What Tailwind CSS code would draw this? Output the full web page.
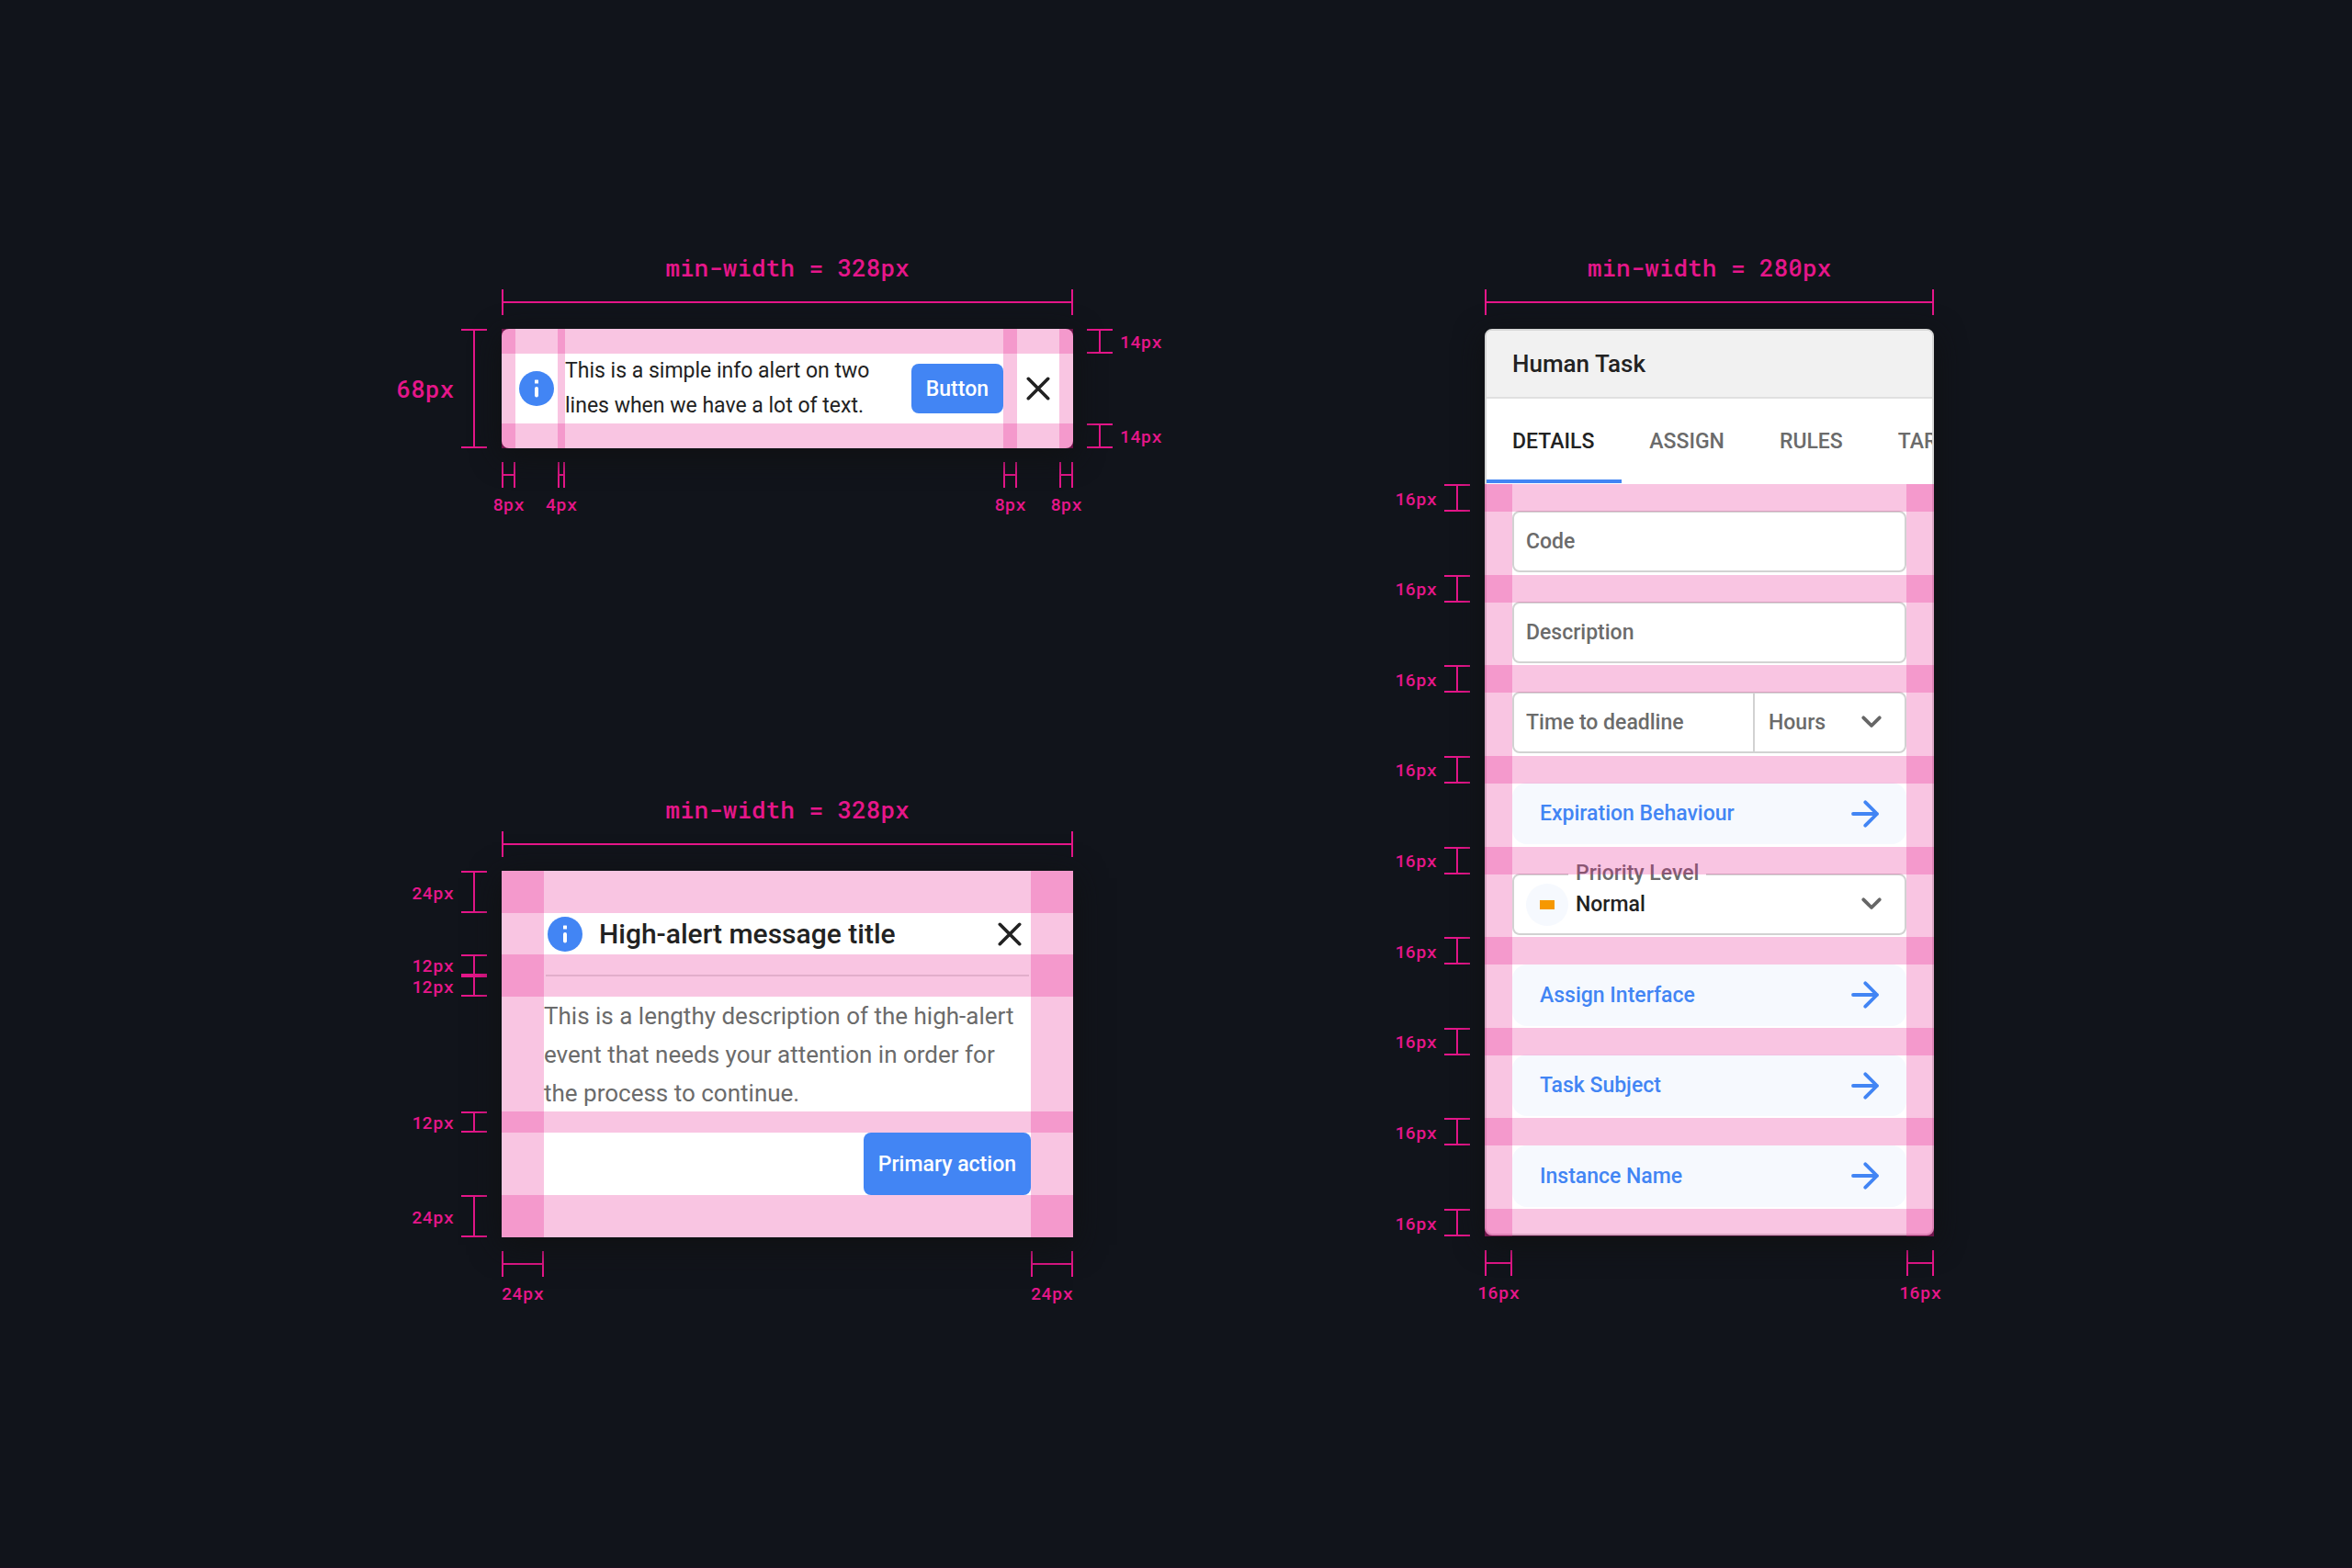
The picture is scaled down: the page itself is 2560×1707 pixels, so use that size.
<!DOCTYPE html>
<html lang="en">
<head>
    <meta charset="UTF-8">
    <meta name="viewport" content="width=device-width, initial-scale=1.0">
    <title>Spacing and minimum widths</title>
    <script src="https://cdn.jsdelivr.net/npm/@tailwindcss/browser@4"></script>
</head>
<body class="min-h-screen bg-[#11141b] border-b border-[#1c1020] font-['Roboto',sans-serif] text-[#222222]">

    <!-- Shared icons -->
    <svg class="hidden">
        <symbol id="icon-info" viewBox="0 0 38 38">
            <circle cx="19" cy="19" r="19" fill="#4285f4"/>
            <rect x="17" y="9.500" width="4" height="4" rx="0.500" fill="#fff"/>
            <path d="M19 19v7.500" stroke="#fff" stroke-width="4" stroke-linecap="round"/>
        </symbol>
        <symbol id="icon-close" viewBox="0 0 26 26">
            <path d="M2.300 2.300l21.400 21.400M23.700 2.300L2.300 23.700" stroke="#222" stroke-width="3.600" stroke-linecap="round"/>
        </symbol>
        <symbol id="icon-chevron" viewBox="0 0 22 14">
            <path d="M2.300 2.300L11 11l8.700-8.700" fill="none" stroke="#666" stroke-width="3.800" stroke-linecap="round" stroke-linejoin="round"/>
        </symbol>
        <symbol id="icon-arrow" viewBox="0 0 30 30">
            <path d="M2 15h26M15.300 2.300L28 15 15.300 27.700" fill="none" stroke="#4285f4" stroke-width="3.800" stroke-linecap="round" stroke-linejoin="round"/>
        </symbol>
    </svg>

    <main class="flex justify-center gap-[213px] pt-[276px]">

        <div class="flex flex-col gap-[305px]">

            <!-- Inline alert -->
            <section class="grid grid-cols-[120px_622px_115px] font-['Roboto_Mono','DejaVu_Sans_Mono',monospace] text-[19px] font-medium leading-none text-[#e6168a]">
                <div class="col-start-2">
                    <p class="mb-2 text-center text-[26px] leading-[31px]">min-width = 328px</p>
                    <div class="mb-[15px] flex h-7 items-center border-x-2 border-[#e6168a]"><span class="h-0.5 w-full bg-[#e6168a]"></span></div>
                </div>

                <div class="col-start-1 flex items-center justify-end gap-2 pr-4 text-[26px]">
                    <span>68px</span>
                    <div class="flex w-7 justify-center self-stretch border-y-2 border-[#e6168a]"><span class="w-0.5 bg-[#e6168a]"></span></div>
                </div>

                <div class="relative">
                    <div role="alert" class="flex items-center rounded-lg bg-white px-[15px] py-[27px] font-['Roboto',sans-serif] text-[#222222] shadow-[0_8px_32px_#101112]">
                        <span class="mr-2 flex w-[46px] shrink-0 justify-center">
                            <svg class="size-[38px]"><use href="#icon-info"/></svg>
                        </span>
                        <p class="flex-1 text-[23px] leading-[38px] font-normal whitespace-nowrap">This is a simple info alert on two<br>lines when we have a lot of text.</p>
                        <button type="button" class="mr-[15px] h-[54px] rounded-lg bg-[#4285f4] px-4 text-[23px] font-medium text-white">Button</button>
                        <button type="button" aria-label="Close" class="flex w-[46px] justify-center">
                            <svg class="size-[26px]"><use href="#icon-close"/></svg>
                        </button>
                    </div>
                    <div class="pointer-events-none absolute inset-0 grid grid-cols-[15px_46px_8px_1fr_15px_46px_15px]">
                        <span class="col-start-1 bg-[#e7178b]/25"></span>
                        <span class="col-start-3 bg-[#e7178b]/25"></span>
                        <span class="col-start-5 bg-[#e7178b]/25"></span>
                        <span class="col-start-7 bg-[#e7178b]/25"></span>
                    </div>
                    <div class="pointer-events-none absolute inset-0 flex flex-col justify-between">
                        <span class="h-[27px] bg-[#e7178b]/25"></span>
                        <span class="h-[27px] bg-[#e7178b]/25"></span>
                    </div>
                </div>

                <div class="flex flex-col justify-between pl-[15px]">
                    <div class="flex h-[27px] items-center gap-2">
                        <div class="flex w-7 justify-center self-stretch border-y-2 border-[#e6168a]"><span class="w-0.5 bg-[#e6168a]"></span></div>
                        <span>14px</span>
                    </div>
                    <div class="flex h-[27px] items-center gap-2">
                        <div class="flex w-7 justify-center self-stretch border-y-2 border-[#e6168a]"><span class="w-0.5 bg-[#e6168a]"></span></div>
                        <span>14px</span>
                    </div>
                </div>

                <div class="col-start-2 mt-[15px] grid grid-cols-[15px_46px_8px_1fr_15px_46px_15px] leading-6">
                    <div class="col-start-1 flex flex-col items-center gap-1.5">
                        <div class="flex h-7 w-full items-center border-x-2 border-[#e6168a]"><span class="h-0.5 w-full bg-[#e6168a]"></span></div>
                        <span>8px</span>
                    </div>
                    <div class="col-start-3 flex flex-col items-center gap-1.5">
                        <div class="flex h-7 w-full items-center border-x-2 border-[#e6168a]"><span class="h-0.5 w-full bg-[#e6168a]"></span></div>
                        <span>4px</span>
                    </div>
                    <div class="col-start-5 flex flex-col items-center gap-1.5">
                        <div class="flex h-7 w-full items-center border-x-2 border-[#e6168a]"><span class="h-0.5 w-full bg-[#e6168a]"></span></div>
                        <span>8px</span>
                    </div>
                    <div class="col-start-7 flex flex-col items-center gap-1.5">
                        <div class="flex h-7 w-full items-center border-x-2 border-[#e6168a]"><span class="h-0.5 w-full bg-[#e6168a]"></span></div>
                        <span>8px</span>
                    </div>
                </div>
            </section>

            <!-- High-alert dialog -->
            <section class="grid grid-cols-[120px_622px_115px] font-['Roboto_Mono','DejaVu_Sans_Mono',monospace] text-[19px] font-medium leading-none text-[#e6168a]">
                <div class="col-start-2">
                    <p class="mb-2 text-center text-[26px] leading-[31px]">min-width = 328px</p>
                    <div class="mb-[15px] flex h-7 items-center border-x-2 border-[#e6168a]"><span class="h-0.5 w-full bg-[#e6168a]"></span></div>
                </div>

                <div class="col-start-1 grid grid-rows-[46px_45px_23px_23px_125px_23px_68px_46px] pr-4">
                    <div class="row-start-1 flex items-center justify-end gap-2">
                        <span>24px</span>
                        <div class="flex w-7 justify-center self-stretch border-y-2 border-[#e6168a]"><span class="w-0.5 bg-[#e6168a]"></span></div>
                    </div>
                    <div class="row-start-3 flex items-center justify-end gap-2">
                        <span>12px</span>
                        <div class="flex w-7 justify-center self-stretch border-y-2 border-[#e6168a]"><span class="w-0.5 bg-[#e6168a]"></span></div>
                    </div>
                    <div class="row-start-4 flex items-center justify-end gap-2">
                        <span>12px</span>
                        <div class="flex w-7 justify-center self-stretch border-y-2 border-[#e6168a]"><span class="w-0.5 bg-[#e6168a]"></span></div>
                    </div>
                    <div class="row-start-6 flex items-center justify-end gap-2">
                        <span>12px</span>
                        <div class="flex w-7 justify-center self-stretch border-y-2 border-[#e6168a]"><span class="w-0.5 bg-[#e6168a]"></span></div>
                    </div>
                    <div class="row-start-8 flex items-center justify-end gap-2">
                        <span>24px</span>
                        <div class="flex w-7 justify-center self-stretch border-y-2 border-[#e6168a]"><span class="w-0.5 bg-[#e6168a]"></span></div>
                    </div>
                </div>

                <div class="relative">
                    <div role="alertdialog" aria-labelledby="dialog-title" class="grid grid-rows-[45px_46px_125px_23px_68px] bg-white px-[46px] py-[46px] font-['Roboto',sans-serif] text-[#222222] shadow-[0_8px_32px_#101112]">
                        <div class="flex items-center">
                            <span class="flex w-[46px] justify-center">
                                <svg class="size-[38px]"><use href="#icon-info"/></svg>
                            </span>
                            <h2 id="dialog-title" class="flex-1 pl-3.5 text-[30px] font-medium">High-alert message title</h2>
                            <button type="button" aria-label="Close" class="flex w-[46px] justify-center">
                                <svg class="size-[26px]"><use href="#icon-close"/></svg>
                            </button>
                        </div>
                        <hr class="mx-0.5 self-center border-t-2 border-[#e0e0e0]">
                        <p class="text-[26px] leading-[42px] font-normal whitespace-nowrap text-[#6b6b6b]">This is a lengthy description of the high-alert<br>event that needs your attention in order for<br>the process to continue.</p>
                        <button type="button" class="row-start-5 justify-self-end rounded-lg bg-[#4285f4] px-4 text-[23px] font-medium text-white">Primary action</button>
                    </div>
                    <div class="pointer-events-none absolute inset-0 flex justify-between">
                        <span class="w-[46px] bg-[#e7178b]/25"></span>
                        <span class="w-[46px] bg-[#e7178b]/25"></span>
                    </div>
                    <div class="pointer-events-none absolute inset-0 grid grid-rows-[46px_45px_46px_125px_23px_68px_46px]">
                        <span class="row-start-1 bg-[#e7178b]/25"></span>
                        <span class="row-start-3 bg-[#e7178b]/25"></span>
                        <span class="row-start-5 bg-[#e7178b]/25"></span>
                        <span class="row-start-7 bg-[#e7178b]/25"></span>
                    </div>
                </div>

                <div class="col-start-2 mt-[15px] flex justify-between leading-6">
                    <div class="flex w-[46px] flex-col items-center gap-1.5">
                        <div class="flex h-7 w-full items-center border-x-2 border-[#e6168a]"><span class="h-0.5 w-full bg-[#e6168a]"></span></div>
                        <span>24px</span>
                    </div>
                    <div class="flex w-[46px] flex-col items-center gap-1.5">
                        <div class="flex h-7 w-full items-center border-x-2 border-[#e6168a]"><span class="h-0.5 w-full bg-[#e6168a]"></span></div>
                        <span>24px</span>
                    </div>
                </div>
            </section>
        </div>

        <!-- Side panel -->
        <section class="grid grid-cols-[120px_489px_29px] content-start font-['Roboto_Mono','DejaVu_Sans_Mono',monospace] text-[19px] font-medium leading-none text-[#e6168a]">
            <div class="col-start-2">
                <p class="mb-2 text-center text-[26px] leading-[31px]">min-width = 280px</p>
                <div class="mb-[15px] flex h-7 items-center border-x-2 border-[#e6168a]"><span class="h-0.5 w-full bg-[#e6168a]"></span></div>
            </div>

            <div class="col-start-1 flex flex-col justify-between pt-[169px] pr-4">
                <div class="flex h-[30px] items-center justify-end gap-2">
                    <span>16px</span>
                    <div class="flex w-7 justify-center self-stretch border-y-2 border-[#e6168a]"><span class="w-0.5 bg-[#e6168a]"></span></div>
                </div>
                <div class="flex h-[30px] items-center justify-end gap-2">
                    <span>16px</span>
                    <div class="flex w-7 justify-center self-stretch border-y-2 border-[#e6168a]"><span class="w-0.5 bg-[#e6168a]"></span></div>
                </div>
                <div class="flex h-[30px] items-center justify-end gap-2">
                    <span>16px</span>
                    <div class="flex w-7 justify-center self-stretch border-y-2 border-[#e6168a]"><span class="w-0.5 bg-[#e6168a]"></span></div>
                </div>
                <div class="flex h-[30px] items-center justify-end gap-2">
                    <span>16px</span>
                    <div class="flex w-7 justify-center self-stretch border-y-2 border-[#e6168a]"><span class="w-0.5 bg-[#e6168a]"></span></div>
                </div>
                <div class="flex h-[30px] items-center justify-end gap-2">
                    <span>16px</span>
                    <div class="flex w-7 justify-center self-stretch border-y-2 border-[#e6168a]"><span class="w-0.5 bg-[#e6168a]"></span></div>
                </div>
                <div class="flex h-[30px] items-center justify-end gap-2">
                    <span>16px</span>
                    <div class="flex w-7 justify-center self-stretch border-y-2 border-[#e6168a]"><span class="w-0.5 bg-[#e6168a]"></span></div>
                </div>
                <div class="flex h-[30px] items-center justify-end gap-2">
                    <span>16px</span>
                    <div class="flex w-7 justify-center self-stretch border-y-2 border-[#e6168a]"><span class="w-0.5 bg-[#e6168a]"></span></div>
                </div>
                <div class="flex h-[30px] items-center justify-end gap-2">
                    <span>16px</span>
                    <div class="flex w-7 justify-center self-stretch border-y-2 border-[#e6168a]"><span class="w-0.5 bg-[#e6168a]"></span></div>
                </div>
                <div class="flex h-[30px] items-center justify-end gap-2">
                    <span>16px</span>
                    <div class="flex w-7 justify-center self-stretch border-y-2 border-[#e6168a]"><span class="w-0.5 bg-[#e6168a]"></span></div>
                </div>
            </div>

            <div class="relative pb-px">
                <div class="overflow-hidden rounded-lg border-2 border-[#d6d6d6] bg-white font-['Roboto',sans-serif] text-[23px] font-medium text-[#222222] shadow-[0_8px_32px_#101112]">
                    <h2 class="flex h-[74px] items-center border-b-2 border-[#e0e0e0] bg-[#f1f1f1] px-7 text-[26px]">Human Task</h2>
                    <nav class="flex h-[93px] pb-px text-[#6b6b6b]">
                        <a href="#details" class="flex items-center border-b-4 border-[#4285f4] px-[30px] pt-1 pl-7 text-[#222222]">DETAILS</a>
                        <a href="#assign" class="flex items-center px-[30px]">ASSIGN</a>
                        <a href="#rules" class="flex items-center px-[30px]">RULES</a>
                        <a href="#targets" class="flex items-center px-[30px]">TARGETS</a>
                    </nav>

                    <form class="flex h-[816px] flex-col justify-between px-7 py-[29px]">
                        <input type="text" aria-label="Code" placeholder="Code" class="h-[67px] rounded-lg border-2 border-[#d2d2d2] px-[13px] placeholder:text-[#6b6b6b]">
                        <input type="text" aria-label="Description" placeholder="Description" class="h-[67px] rounded-lg border-2 border-[#d2d2d2] px-[13px] placeholder:text-[#6b6b6b]">
                        <div class="flex h-[67px] rounded-lg border-2 border-[#d2d2d2]">
                            <input type="text" aria-label="Time to deadline" placeholder="Time to deadline" class="min-w-0 flex-1 px-[13px] placeholder:text-[#6b6b6b]">
                            <div class="relative w-[165px] border-l-2 border-[#d2d2d2] text-[#6b6b6b]">
                                <select aria-label="Deadline unit" class="h-full w-full appearance-none px-[15px]">
                                    <option>Hours</option>
                                </select>
                                <svg class="pointer-events-none absolute top-6 right-[25px] h-3.5 w-[22px]"><use href="#icon-chevron"/></svg>
                            </div>
                        </div>
                        <a href="#expiration" class="flex h-[67px] items-center justify-between rounded-2xl bg-[#f6f9fe] px-[30px] text-[#4285f4]">
                            Expiration Behaviour
                            <svg class="size-[30px]"><use href="#icon-arrow"/></svg>
                        </a>
                        <div class="relative h-[67px] rounded-lg border-2 border-[#d2d2d2]">
                            <label for="priority" class="absolute -top-4 left-[59px] bg-white px-2 leading-7 text-[#6b6b6b]">Priority Level</label>
                            <select id="priority" class="h-full w-full appearance-none pl-[67px]">
                                <option>Normal</option>
                            </select>
                            <span class="pointer-events-none absolute top-[9px] left-[13px] flex size-[46px] items-center justify-center rounded-full bg-[#f6f9fe]"><span class="h-2.5 w-4 bg-[#f69800]"></span></span>
                            <svg class="pointer-events-none absolute top-6 right-[25px] h-3.5 w-[22px]"><use href="#icon-chevron"/></svg>
                        </div>
                        <a href="#interface" class="flex h-[67px] items-center justify-between rounded-2xl bg-[#f6f9fe] px-[30px] text-[#4285f4]">
                            Assign Interface
                            <svg class="size-[30px]"><use href="#icon-arrow"/></svg>
                        </a>
                        <a href="#subject" class="flex h-[67px] items-center justify-between rounded-2xl bg-[#f6f9fe] px-[30px] text-[#4285f4]">
                            Task Subject
                            <svg class="size-[30px]"><use href="#icon-arrow"/></svg>
                        </a>
                        <a href="#instance" class="flex h-[67px] items-center justify-between rounded-2xl bg-[#f6f9fe] px-[30px] text-[#4285f4]">
                            Instance Name
                            <svg class="size-[30px]"><use href="#icon-arrow"/></svg>
                        </a>
                    </form>
                </div>
                <div class="pointer-events-none absolute inset-0 flex justify-between pt-[169px]">
                    <span class="w-[30px] bg-[#e7178b]/25"></span>
                    <span class="w-[30px] bg-[#e7178b]/25"></span>
                </div>
                <div class="pointer-events-none absolute inset-0 flex flex-col justify-between pt-[169px]">
                    <span class="h-[30px] bg-[#e7178b]/25"></span>
                    <span class="h-[30px] bg-[#e7178b]/25"></span>
                    <span class="h-[30px] bg-[#e7178b]/25"></span>
                    <span class="h-[30px] bg-[#e7178b]/25"></span>
                    <span class="h-[30px] bg-[#e7178b]/25"></span>
                    <span class="h-[30px] bg-[#e7178b]/25"></span>
                    <span class="h-[30px] bg-[#e7178b]/25"></span>
                    <span class="h-[30px] bg-[#e7178b]/25"></span>
                    <span class="h-[30px] bg-[#e7178b]/25"></span>
                </div>
            </div>

            <div class="col-start-2 mt-[15px] flex justify-between leading-6">
                <div class="flex w-[30px] flex-col items-center gap-1.5">
                    <div class="flex h-7 w-full items-center border-x-2 border-[#e6168a]"><span class="h-0.5 w-full bg-[#e6168a]"></span></div>
                    <span>16px</span>
                </div>
                <div class="flex w-[30px] flex-col items-center gap-1.5">
                    <div class="flex h-7 w-full items-center border-x-2 border-[#e6168a]"><span class="h-0.5 w-full bg-[#e6168a]"></span></div>
                    <span>16px</span>
                </div>
            </div>
        </section>
    </main>
</body>
</html>
